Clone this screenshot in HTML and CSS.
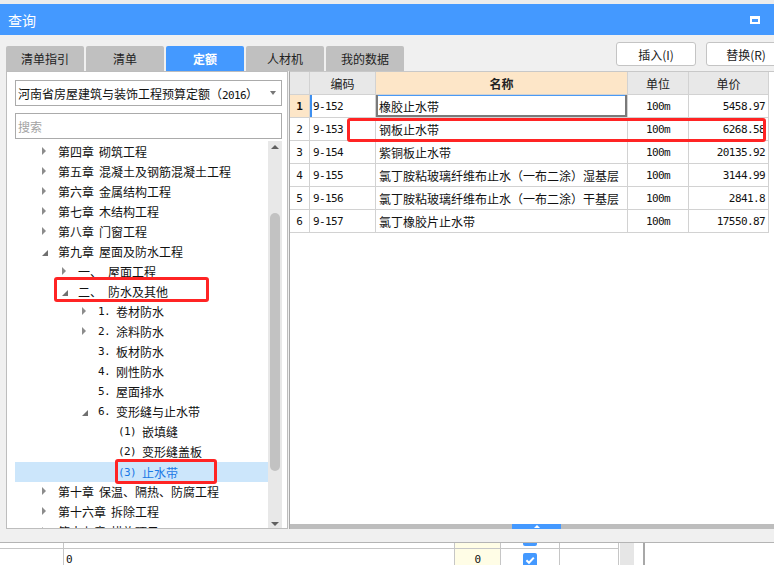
FILE: index.html
```html
<!DOCTYPE html>
<html lang="zh">
<head>
<meta charset="utf-8">
<title>查询</title>
<link rel="stylesheet" href="styles.css">
</head>
<body>
<div class="app">
  <div class="topstrip"></div>
  <div class="titlebar"><span class="title">查询</span><span class="maxbtn"></span></div>
  <div class="toolbar">
    <div class="tabs">
      <div class="tab">清单指引</div>
      <div class="tab">清单</div>
      <div class="tab active">定额</div>
      <div class="tab">人材机</div>
      <div class="tab">我的数据</div>
    </div>
    <div class="buttons">
      <button class="btn">插入(I)</button>
      <button class="btn">替换(R)</button>
    </div>
  </div>
  <div class="main">
    <div class="leftpanel">
      <div class="select"><span>河南省房屋建筑与装饰工程预算定额（<span class="mono">2016</span>）</span><span class="caret"></span></div>
      <div class="search">搜索</div>
      <div class="treewrap">
        <div class="tree">
          <div class="row l0"><span class="arr c"></span><span class="n0">第四章</span>砌筑工程</div>
          <div class="row l0"><span class="arr c"></span><span class="n0">第五章</span>混凝土及钢筋混凝土工程</div>
          <div class="row l0"><span class="arr c"></span><span class="n0">第六章</span>金属结构工程</div>
          <div class="row l0"><span class="arr c"></span><span class="n0">第七章</span>木结构工程</div>
          <div class="row l0"><span class="arr c"></span><span class="n0">第八章</span>门窗工程</div>
          <div class="row l0"><span class="arr e"></span><span class="n0">第九章</span>屋面及防水工程</div>
          <div class="row l1"><span class="arr c"></span><span class="n1">一、</span>屋面工程</div>
          <div class="row l1"><span class="arr e"></span><span class="n1">二、</span>防水及其他</div>
          <div class="row l2"><span class="arr c"></span><span class="n2 mono">1.</span>卷材防水</div>
          <div class="row l2"><span class="arr c"></span><span class="n2 mono">2.</span>涂料防水</div>
          <div class="row l2"><span class="arr"></span><span class="n2 mono">3.</span>板材防水</div>
          <div class="row l2"><span class="arr"></span><span class="n2 mono">4.</span>刚性防水</div>
          <div class="row l2"><span class="arr"></span><span class="n2 mono">5.</span>屋面排水</div>
          <div class="row l2"><span class="arr e"></span><span class="n2 mono">6.</span>变形缝与止水带</div>
          <div class="row l3"><span class="arr"></span><span class="n3 mono">(1)</span>嵌填缝</div>
          <div class="row l3"><span class="arr"></span><span class="n3 mono">(2)</span>变形缝盖板</div>
          <div class="row l3 sel"><span class="arr"></span><span class="n3 mono">(3)</span>止水带</div>
          <div class="row l0"><span class="arr c"></span><span class="n0">第十章</span>保温、隔热、防腐工程</div>
          <div class="row l0"><span class="arr c"></span><span class="n0">第十六章</span>拆除工程</div>
          <div class="row l0"><span class="arr c"></span><span class="n0">第十七章</span>措施项目</div>
        </div>
        <div class="vscroll">
          <span class="sup"></span>
          <span class="sthumb"></span>
          <span class="sfill"></span>
          <span class="sdown"></span>
        </div>
        <div class="redbox r1"></div>
        <div class="redbox r2"></div>
      </div>
    </div>
    <div class="rightpanel">
      <div class="grid">
        <div class="grow head">
          <div></div><div>编码</div><div class="hname">名称</div><div>单位</div><div>单价</div>
        </div>
        <div class="grow">
          <div class="rn cur">1</div><div class="mono code fcode">9-152</div><div class="focus">橡胶止水带</div><div class="mono unit">100m</div><div class="mono price">5458.97</div>
        </div>
        <div class="grow">
          <div class="rn">2</div><div class="mono code">9-153</div><div>钢板止水带</div><div class="mono unit">100m</div><div class="mono price">6268.58</div>
        </div>
        <div class="grow">
          <div class="rn">3</div><div class="mono code">9-154</div><div>紫铜板止水带</div><div class="mono unit">100m</div><div class="mono price">20135.92</div>
        </div>
        <div class="grow">
          <div class="rn">4</div><div class="mono code">9-155</div><div>氯丁胺粘玻璃纤维布止水（一布二涂）湿基层</div><div class="mono unit">100m</div><div class="mono price">3144.99</div>
        </div>
        <div class="grow">
          <div class="rn">5</div><div class="mono code">9-156</div><div>氯丁胺粘玻璃纤维布止水（一布二涂）干基层</div><div class="mono unit">100m</div><div class="mono price">2841.8</div>
        </div>
        <div class="grow">
          <div class="rn">6</div><div class="mono code">9-157</div><div>氯丁橡胶片止水带</div><div class="mono unit">100m</div><div class="mono price">17550.87</div>
        </div>
      </div>
      <div class="hscroll"><div class="hthumb"><span class="hup"></span></div></div>
      <div class="redbox r3"></div>
    </div>
  </div>
  <div class="band"></div>
  <div class="bottom">
    <div class="bgrid">
      <div class="brows">
        <div class="brow">
          <div></div><div></div><div class="yel"></div><div class="chk"><svg width="14" height="14" viewBox="0 0 14 14"><rect width="14" height="14" rx="2" fill="#4499ff"/><path d="M3.4 7.2 L6 9.8 L10.8 4.6" fill="none" stroke="#fff" stroke-width="2"/></svg></div><div></div>
        </div>
        <div class="brow">
          <div></div><div class="mono">0</div><div class="yel mono">0</div><div class="chk"><svg width="14" height="14" viewBox="0 0 14 14"><rect width="14" height="14" rx="2" fill="#4499ff"/><path d="M3.4 7.2 L6 9.8 L10.8 4.6" fill="none" stroke="#fff" stroke-width="2"/></svg></div><div></div>
        </div>
      </div>
    </div>
    <div class="bscroll"></div>
    <div class="bsp"></div>
    <div class="bdiv"></div>
    <div class="brest"></div>
  </div>
</div>
</body>
</html>
```

FILE: styles.css
```css
* { box-sizing: border-box; }
html, body { margin: 0; padding: 0; }
body {
  width: 774px;
  height: 565px;
  overflow: hidden;
  background: #f0f0f0;
  font-family: "Noto Sans CJK SC", "Noto Sans", sans-serif;
  font-size: 12px;
  color: #111;
}
.mono {
  font-family: "DejaVu Sans Mono", "Liberation Mono", monospace;
  font-size: 11px;
  letter-spacing: -0.6px;
}
.app { display: flex; flex-direction: column; width: 774px; height: 565px; }
.topstrip { height: 4px; flex: none; background: #ececec; }
.titlebar {
  height: 31px; flex: none;
  background: #4499ff;
  display: flex; align-items: center; justify-content: space-between;
  padding: 0 14px 0 8px;
}
.title { color: #fff; font-size: 14px; line-height: 1; }
.maxbtn { width: 10px; height: 8px; border: 2px solid #fff; border-top-width: 3px; }

.toolbar { height: 36px; flex: none; display: flex; justify-content: space-between; }
.tabs { display: flex; gap: 2px; padding-left: 6px; align-items: flex-end; }
.tab {
  width: 78px; height: 25px;
  background: #c0c0c0;
  border-radius: 2px 2px 0 0;
  display: flex; align-items: center; justify-content: center;
  color: #222;
}
.tab.active { background: #4499ff; color: #fff; font-weight: bold; }
.buttons { width: 158px; display: flex; gap: 10px; overflow: hidden; padding-top: 7px; }
.btn {
  flex: none; width: 80px; height: 24px;
  background: #fff; border: 1px solid #c4c4c4; border-radius: 3px;
  font-family: inherit; font-size: 12px; color: #222; padding: 0;
}

.main { height: 458px; flex: none; display: flex; padding-left: 6px; gap: 1px; }
.leftpanel {
  width: 282px; flex: none;
  background: #fff;
  border: 1px solid #bdbdbd;
  padding: 8px 5px 0 8px;
  display: flex; flex-direction: column;
}
.select {
  height: 26px; flex: none;
  border: 1px solid #ababab;
  display: flex; align-items: center; justify-content: space-between;
  padding: 0 5px 0 2px;
  white-space: nowrap;
}
.select .mono { font-size: 11px; }
.caret { border-top: 4px solid #777; border-left: 3px solid transparent; border-right: 3px solid transparent; }
.search {
  margin-top: 7px; height: 26px; flex: none;
  border: 1px solid #ababab;
  padding-left: 2px;
  display: flex; align-items: center;
  color: #a3a3a3;
}
.treewrap { position: relative; margin-top: 2px; flex: 1; display: flex; overflow: hidden; }
.tree { flex: 1; overflow: hidden; }
.row { height: 20px; display: flex; align-items: center; white-space: nowrap; }
.row.l0 { padding-left: 27px; }
.row.l1 { padding-left: 47px; }
.row.l2 { padding-left: 67px; }
.row.l3 { padding-left: 87px; }
.row.sel { background: #cce6fb; color: #1a78e6; margin-top: 1px; margin-bottom: -1px; }
.arr { width: 16px; height: 20px; flex: none; position: relative; }
.arr.c::before {
  content: ""; position: absolute; left: 0; top: 6px;
  border-left: 4px solid #8c8c8c; border-top: 4px solid transparent; border-bottom: 4px solid transparent;
}
.arr.e::before {
  content: ""; position: absolute; left: 0; top: 9px;
  border-bottom: 6px solid #707070; border-left: 6px solid transparent;
}
.n0 { margin-right: 5px; }
.n1 { margin-right: 6px; }
.n2 { width: 18px; flex: none; }
.n3 { width: 24px; flex: none; }

.vscroll { width: 14px; flex: none; background: #e8e8e8; display: flex; flex-direction: column; align-items: center; padding-top: 4px; }
.sup { border-bottom: 4px solid #606060; border-left: 4px solid transparent; border-right: 4px solid transparent; }
.sthumb { margin-top: 64px; width: 10px; height: 258px; background: #c2c2c2; border-radius: 5px; }
.sfill { flex: 1; }
.sdown { border-top: 4px solid #606060; border-left: 4px solid transparent; border-right: 4px solid transparent; margin-bottom: 2px; }

.redbox { position: absolute; border: 3px solid #ff2424; border-radius: 3px; z-index: 5; }
.r1 { left: 39px; top: 136px; width: 155px; height: 25px; }
.r2 { left: 100px; top: 318px; width: 102px; height: 25px; }
.r3 { left: 57px; top: 46px; width: 419px; height: 24px; }

.rightpanel {
  flex: 1; position: relative;
  background: #fff;
  border-top: 1px solid #c8c8c8;
  border-left: 1px solid #a8a8a8;
  display: flex; flex-direction: column;
}
.grid { flex: 1; }
.grow { display: grid; grid-template-columns: 20px 66px 252px 61px 80px; height: 23px; }
.grow > div {
  border-right: 1px solid #d2d2d2; border-bottom: 1px solid #d2d2d2;
  display: flex; align-items: center;
  padding: 0 3px;
  white-space: nowrap; overflow: hidden;
}
.grow.head > div { background: #e8e8e8; justify-content: center; color: #222; }
.grow.head > div.hname { background: #fde6c8; font-weight: bold; }
.grow > div.rn { justify-content: center; padding: 0; font-family: "DejaVu Sans Mono", monospace; font-size: 11px; }
.grow > div.rn.cur { background: #fde6c8; font-weight: bold; }
.grow > div.unit { justify-content: center; }
.grow > div.price { justify-content: flex-end; }
.grow > div.fcode { box-shadow: inset 2px 0 0 #3d8ff0; }
.grow > div.focus {
  box-shadow: inset 2px 0 0 #7a7a7a, inset -2px 0 0 #7a7a7a, inset 0 -2px 0 #7a7a7a, inset 0 1px 0 #4a9af5;
}
.hscroll { height: 5px; flex: none; background: #bdbdbd; display: flex; }
.hthumb { margin-left: 222px; width: 49px; background: #4499ff; display: flex; align-items: center; justify-content: center; }
.hup { border-bottom: 3px solid #fff; border-left: 3px solid transparent; border-right: 3px solid transparent; }

.band { height: 13px; flex: none; }
.bottom { flex: 1; border-top: 1px solid #b4b4b4; background: #fff; display: flex; overflow: hidden; }
.bgrid { width: 619px; flex: none; overflow: hidden; }
.brows { margin-top: -15px; }
.brow { display: grid; grid-template-columns: 64px 391px 46px 59px 59px; height: 21px; border-bottom: 1px solid #c6c6c6; }
.brow > div { border-right: 1px solid #c6c6c6; display: flex; align-items: center; padding-left: 2px; }
.brow > div.yel { background: #fffde6; justify-content: center; padding: 0; }
.brow > div.chk { justify-content: center; align-items: flex-start; padding: 4px 0 0 0; }
.bscroll { width: 14px; flex: none; margin-left: 1px; background: #e6e6e6; }
.bsp { width: 9px; flex: none; }
.bdiv { width: 2px; flex: none; background: #a8a8a8; }
.brest { flex: 1; }
```
